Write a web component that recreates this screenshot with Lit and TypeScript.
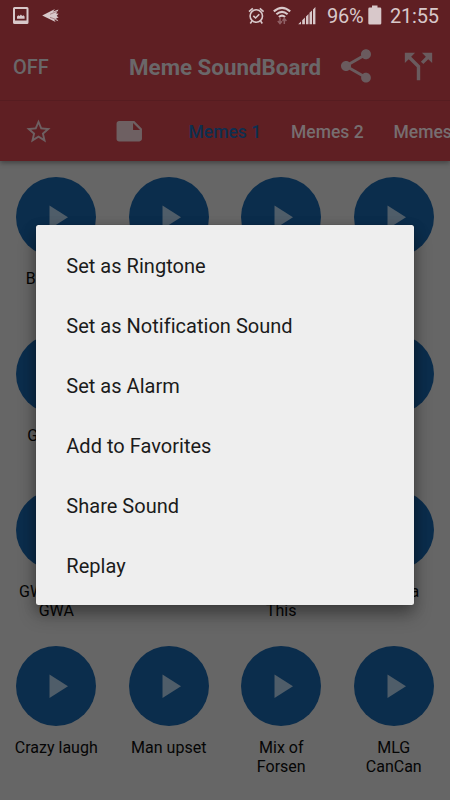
import { LitElement, html, css } from "lit";
import { customElement, property } from "lit/decorators.js";

@customElement("status-bar")
class StatusBar extends LitElement {
  static styles = css`
    :host { display: flex; height: 32px; color: #d8c8ca; font-size: 20px; box-sizing: border-box; padding-left: 13px; }
    svg { display: block; fill: currentColor; flex: none; }
    .photo { margin-top: 7px; }
    .plane { margin: 8px 0 0 13px; }
    .alarm { margin: 7px 0 0 auto; }
    .wifi { margin: 5px 0 0 8px; }
    .signal { margin: 7px 0 0 7px; }
    .percent { margin-left: 11px; line-height: 33.500px; width: 37px; white-space: nowrap; letter-spacing: -0.2px; }
    .battery { margin: 5px 0 0 4px; }
    .time { margin: 0 11px 0 8px; line-height: 33.500px; width: 49px; white-space: nowrap; letter-spacing: -0.2px; }
  `;
  render() {
    return html`
      <svg class="photo" width="16" height="17" viewBox="0 0 16 17">
        <path fill-rule="evenodd" d="M1.500 0h12.500q1.500 0 1.500 1.500v14q0 1.500-1.500 1.500h-12.500q-1.500 0-1.500-1.500v-14q0-1.500 1.500-1.500zM2 2v11.500h11.500v-11.500z"/>
        <path d="M4 11.800v-2.300l1.300-1.200 1.300.6 1.300-1.300 1.300 1.300 1.200-.6 1.200 1.200v2.300z"/>
      </svg>
      <svg class="plane" width="18" height="16" viewBox="0 0 18 16">
        <path d="M.2 7.600 13 1l-2 2.400 5.500-2-2.400 4.100 2.500.2-1.900 2 1.900 2-2.500.3 2.300 3.200-4.300-1.800 1.500 2.600z"/>
        <path d="M8 6.300 15 3.300M8 9.300 15 11.800" fill="none" stroke="#5f1f23" stroke-width=".4"/>
      </svg>
      <svg class="alarm" width="17" height="18" viewBox="0 0 17 18">
        <g fill="none" stroke="currentColor" stroke-width="1.600">
          <circle cx="8.300" cy="9" r="6.200"/><path d="M1 4.600 4.800 1.300M11.800 1.300 15.600 4.600M4 14 2.300 16.500M12.600 14 14.300 16.500M5.300 8.800 7.600 11 11.300 7.300"/>
        </g>
      </svg>
      <svg class="wifi" width="18" height="20" viewBox="0 0 18 20">
        <g fill="none" stroke="currentColor" stroke-width="2.100">
          <path d="M.8 6.400Q9-.8 17.200 6.400M3.400 9.300Q9 4.400 14.600 9.300M5.900 12Q9 9.300 12.100 12"/>
        </g>
        <g fill="none" stroke="#8f6065" stroke-width="1.500"><path d="M7 13v5.500M4.800 16 7 18.500 9 16.200M11.300 19v-5.500M9.500 15.700 11.300 13.500 13.400 16"/></g>
      </svg>
      <svg class="signal" width="18" height="18" viewBox="0 0 18 18">
        <path d="M.2 17.300 3 14.400v2.900zM4.200 13.200l2.700-2.700v6.800H4.200zM8 9.400l2.500-2.500v10.400H8zM11.500 5.800 14 3.400v13.900h-2.500zM15 2.400 17.400.1v17.200H15z"/>
      </svg>
      <span class="percent">96%</span>
      <svg class="battery" width="14" height="20" viewBox="0 0 14 20"><path d="M4 .5h5.500v2.100H12q1.300 0 1.300 1.300v14.300q0 1.300-1.300 1.300H1.600Q.3 19.500.3 18.200V3.900q0-1.300 1.300-1.300H4z"/></svg>
      <span class="time">21:55</span>`;
  }
}

@customElement("app-toolbar")
class AppToolbar extends LitElement {
  static styles = css`
    :host { display: flex; align-items: center; height: 69px; box-sizing: border-box; padding: 0 11px 0 13px; color: #6a6769; border-bottom: 1px solid #561c20; }
    .off { font-size: 20px; font-weight: 500; width: 116px; line-height: 24px; padding-top: 2px; }
    .title { font-size: 22.350px; font-weight: 700; width: 207px; white-space: nowrap; line-height: 28px; padding-top: 2px; }
    svg { fill: #6a5b5e; flex: none; }
    .split { margin-left: 22px; }
  `;
  render() {
    return html`
      <span class="off">OFF</span>
      <span class="title">Meme SoundBoard</span>
      <svg width="40" height="40" viewBox="0 0 24 24"><path d="M18 16.080c-.76 0-1.440.3-1.960.77L8.910 12.700c.05-.23.090-.46.090-.7s-.04-.47-.09-.7l7.050-4.110c.54.5 1.250.81 2.040.81 1.660 0 3-1.340 3-3s-1.340-3-3-3-3 1.340-3 3c0 .24.04.47.09.7L8.040 9.810C7.500 9.310 6.790 9 6 9c-1.660 0-3 1.340-3 3s1.340 3 3 3c.79 0 1.500-.31 2.040-.81l7.120 4.160c-.05.21-.08.43-.08.65 0 1.610 1.310 2.920 2.920 2.920s2.920-1.310 2.920-2.920-1.310-2.920-2.920-2.920z"/></svg>
      <svg class="split" width="41" height="41" viewBox="0 0 24 24"><path d="M14 4l2.290 2.290-2.880 2.880 1.420 1.420 2.880-2.880L20 10V4zm-4 0H4v6l2.290-2.290 4.710 4.700V20h2v-8.410l-5.290-5.300z"/></svg>`;
  }
}

@customElement("tab-strip")
class TabStrip extends LitElement {
  static styles = css`
    :host { display: flex; align-items: center; height: 60px; overflow: hidden; padding-left: 24px; font-size: 17.500px; font-weight: 500; }
    svg { fill: #6e6062; flex: none; }
    .note { margin: 0 44px 0 61px; }
    .tab { flex: none; width: 102.500px; white-space: nowrap; line-height: 24px; color: #776e70; padding-top: 2px; }
    .active { color: #0e2f50; }
  `;
  render() {
    return html`
      <svg width="29" height="29" viewBox="0 0 24 24"><path d="M22 9.240l-7.190-.62L12 2 9.190 8.630 2 9.240l5.460 4.730L5.820 21 12 17.270 18.180 21l-1.630-7.030zM12 15.400l-3.760 2.270 1-4.280-3.320-2.880 4.380-.38L12 6.100l1.710 4.040 4.380.38-3.320 2.880 1 4.280z"/></svg>
      <svg class="note" width="30.500" height="30.500" viewBox="0 0 24 24"><path d="M22 10l-6-6H4c-1.100 0-2 .9-2 2v12.010c0 1.100.9 1.990 2 1.990l16-.01c1.100 0 2-.89 2-2zm-7-4.500l5.500 5.500H15z"/></svg>
      <span class="tab active">Memes 1</span>
      <span class="tab">Memes 2</span>
      <span class="tab">Memes</span>`;
  }
}

@customElement("sound-button")
class SoundButton extends LitElement {
  @property() label = "";
  static styles = css`
    :host { display: flex; flex-direction: column; align-items: center; height: 156.250px; color: #050505; }
    svg { display: block; flex: none; }
    .label { margin-top: 12px; font-size: 16px; line-height: 19px; text-align: center; white-space: pre-line; }
  `;
  render() {
    return html`
      <svg width="80" height="80" viewBox="0 0 80 80">
        <circle cx="40" cy="40" r="40" fill="#0b2d4c"/>
        <path d="M33.500 28.500v23.500l18.500-11.700z" fill="#4f5d69"/>
      </svg>
      <span class="label">${this.label}</span>`;
  }
}

@customElement("sound-menu")
class SoundMenu extends LitElement {
  static styles = css`
    :host { display: block; box-sizing: border-box; padding: 10.500px 30px 9.500px; background: #eee; border-radius: 2.500px; color: #1b1b1b;
      box-shadow: 0 10px 18px rgba(0,0,0,.3), 0 4px 14px rgba(0,0,0,.2), 0 0 1px rgba(0,0,0,.4); }
    .item { height: 60px; line-height: 60px; font-size: 20px; letter-spacing: .02px; white-space: nowrap; }
  `;
  render() {
    return ["Set as Ringtone", "Set as Notification Sound", "Set as Alarm", "Add to Favorites", "Share Sound", "Replay"]
      .map((t) => html`<div class="item">${t}</div>`);
  }
}

@customElement("app-root")
class AppRoot extends LitElement {
  static styles = css`
    :host { display: block; position: relative; width: 450px; height: 800px; overflow: hidden; background: #666; font-family: Roboto, "Noto Sans", sans-serif; }
    .header { position: relative; background: #5f1f23; box-shadow: 0 2px 5px rgba(0,0,0,.35); }
    .grid { display: grid; grid-template-columns: repeat(4, 112.500px); padding-top: 16.400px; }
    .menu { position: absolute; left: 36.300px; top: 225.300px; width: 377.300px; }
  `;
  private sounds = [
    "Bazinga!", "", "", "",
    "Get Out!", "", "", "",
    "GWA GWA\nGWA", "", "Look at\nThis", "Gotcha",
    "Crazy laugh", "Man upset", "Mix of\nForsen", "MLG\nCanCan",
  ];
  render() {
    return html`
      <div class="header"><status-bar></status-bar><app-toolbar></app-toolbar><tab-strip></tab-strip></div>
      <div class="grid">${this.sounds.map((s) => html`<sound-button .label=${s}></sound-button>`)}</div>
      <sound-menu class="menu"></sound-menu>`;
  }
}
